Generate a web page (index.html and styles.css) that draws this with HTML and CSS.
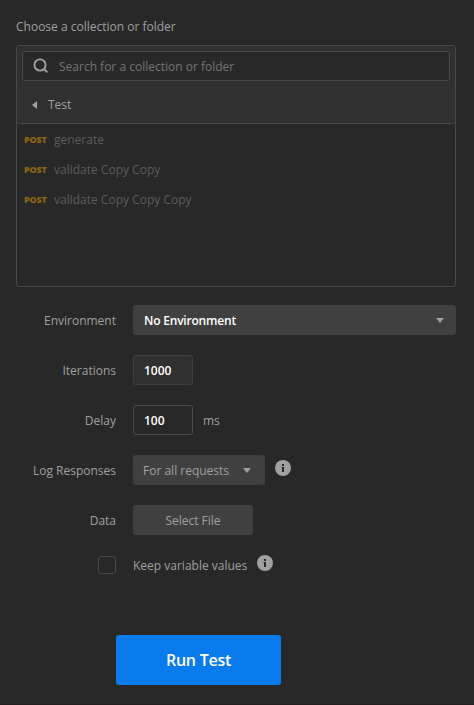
FILE: index.html
```html
<!DOCTYPE html>
<html lang="en">
<head>
<meta charset="utf-8">
<title>Collection Runner</title>
<link rel="stylesheet" href="styles.css">
</head>
<body>
<main class="runner">
  <h1 class="title">Choose a collection or folder</h1>
  <section class="picker">
    <header class="picker-head">
      <div class="search">
        <svg class="search-icon" width="16" height="16" viewBox="0 0 16 16"><circle cx="7" cy="7" r="5.6"/><path d="M11 11l3.4 3.4"/></svg>
        <span>Search for a collection or folder</span>
      </div>
      <div class="crumb">
        <svg class="back" width="5" height="8" viewBox="0 0 5 8"><path d="M5 0v8L0 4z"/></svg>
        <span>Test</span>
      </div>
    </header>
    <ul class="requests">
      <li><span class="method">POST</span><span>generate</span></li>
      <li><span class="method">POST</span><span>validate Copy Copy</span></li>
      <li><span class="method">POST</span><span>validate Copy Copy Copy</span></li>
    </ul>
  </section>
  <div class="form">
    <div class="row"><span class="label">Environment</span><div class="select wide"><span>No Environment</span><svg class="caret" width="8" height="5" viewBox="0 0 8 5"><path d="M0 0h8L4 5z"/></svg></div></div>
    <div class="row"><span class="label">Iterations</span><div class="input filled">1000</div></div>
    <div class="row"><span class="label">Delay</span><div class="input">100</div><span class="unit">ms</span></div>
    <div class="row"><span class="label">Log Responses</span><div class="select short"><span>For all requests</span><svg class="caret" width="8" height="5" viewBox="0 0 8 5"><path d="M0 0h8L4 5z"/></svg></div><svg class="info" width="16" height="16" viewBox="0 0 16 16"><circle cx="8" cy="8" r="8"/><path d="M7 4h2v2H7zM6.5 7H9v5H7V8h-.5z"/></svg></div>
    <div class="row"><span class="label">Data</span><div class="file">Select File</div></div>
    <div class="row keep"><span class="label"><i class="checkbox"></i></span><span class="keep-text">Keep variable values</span><svg class="info" width="16" height="16" viewBox="0 0 16 16"><circle cx="8" cy="8" r="8"/><path d="M7 4h2v2H7zM6.5 7H9v5H7V8h-.5z"/></svg></div>
  </div>
  <div class="run">Run Test</div>
</main>
</body>
</html>
```
FILE: styles.css
```css
* { box-sizing: border-box; }
body {
  margin: 0;
  background: #282828;
  color: #a0a0a0;
  font: 12px/20px "Open Sans", sans-serif;
}
.runner {
  height: 705px;
  padding: 17px 18px 0 16px;
  border-bottom: 1px solid #231f20;
  overflow: hidden;
}
.title { margin: 0 0 8px; font-size: 12px; font-weight: 400; }
.picker {
  height: 242px;
  border: 1px solid #484848;
  border-radius: 3px;
}
.picker-head {
  height: 78px;
  padding: 5px;
  background: #303030;
  border-bottom: 1px solid #484848;
  border-radius: 2px 2px 3px 3px;
}
.search {
  display: flex;
  align-items: center;
  gap: 10px;
  height: 30px;
  padding-left: 10px;
  background: #282828;
  border: 1px solid #484848;
  border-radius: 3px;
  color: #757575;
}
.search span { padding-top: 2px; }
.search-icon { fill: none; stroke: #a0a0a0; stroke-width: 1.9; }
.crumb {
  display: flex;
  align-items: center;
  gap: 11px;
  margin-top: 14px;
  padding-left: 10px;
}
.back, .caret { fill: #a0a0a0; }
.requests { margin: 1px 0 0; padding: 0; list-style: none; color: #5c5c5c; }
.requests li { display: flex; align-items: center; height: 30px; padding-left: 7px; }
.method { width: 30px; color: #8a6516; font-size: 9px; font-weight: 800; letter-spacing: -0.2px; }
.form { margin-top: 18px; }
.row { display: flex; align-items: center; height: 30px; margin-bottom: 20px; }
.label { width: 100px; margin-right: 17px; padding-top: 2px; text-align: right; }
.select {
  display: flex;
  align-items: center;
  justify-content: space-between;
  height: 30px;
  background: #404040;
  border-radius: 3px;
}
.select span { padding-top: 2px; }
.wide { flex: 1; padding: 0 12px 0 11px; color: #fff; font-weight: 600; letter-spacing: -0.2px; }
.short { width: 132px; padding: 0 14px 0 10px; }
.input {
  width: 60px;
  height: 30px;
  padding-left: 10px;
  border: 1px solid #4a4a4a;
  border-radius: 3px;
  color: #fff;
  font-weight: 600;
  line-height: 30px;
}
.filled { background: #303030; border-color: #404040; }
.unit { margin-left: 10px; padding-top: 2px; }
.info { margin: -5px 0 0 10px; fill: #a0a0a0; }
.info path { fill: #282828; }
.file {
  width: 120px;
  height: 30px;
  background: #404040;
  border-radius: 3px;
  text-align: center;
  line-height: 32px;
}
.keep { height: 20px; margin-bottom: 0; }
.keep .label { padding-top: 0; }
.keep-text { padding-top: 2px; }
.checkbox {
  display: block;
  width: 18px;
  height: 18px;
  margin-left: auto;
  border: 1px solid #484848;
  border-radius: 3px;
}
.run {
  width: 165px;
  height: 50px;
  margin: 60px 0 0 100px;
  background: #097bed;
  border-radius: 3px;
  color: #fff;
  font-size: 16px;
  font-weight: 600;
  letter-spacing: -0.25px;
  line-height: 50px;
  text-align: center;
}
```
